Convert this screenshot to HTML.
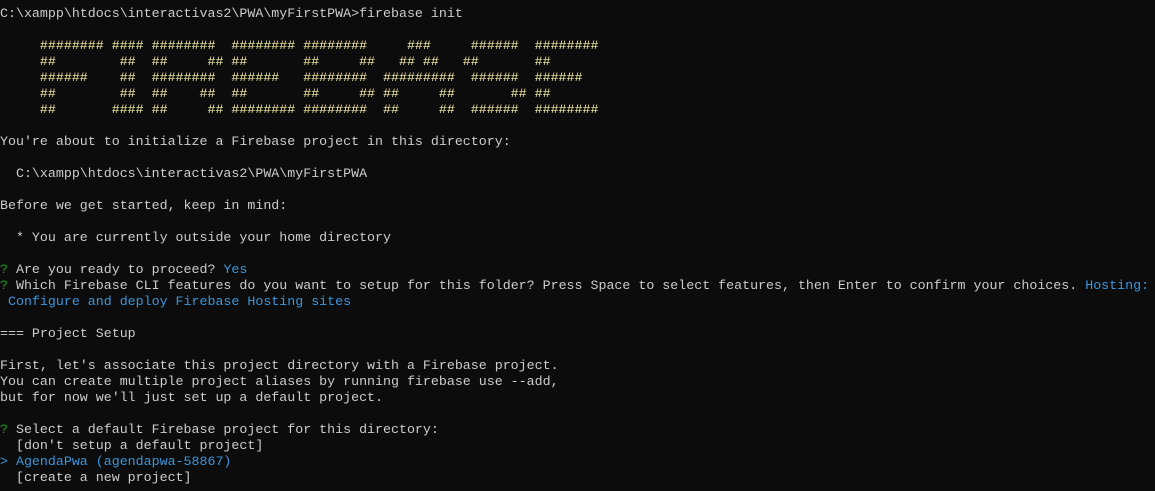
<!DOCTYPE html>
<html><head><meta charset="utf-8"><style>
html,body{margin:0;padding:0;background:#0c0c0c;width:1155px;height:491px;overflow:hidden}
pre{margin:0;padding:6px 0 0 0;font-family:"Liberation Mono",monospace;font-size:13.31px;line-height:16px;color:#cccccc;white-space:pre}
.y{color:#f9f1a5}.g{color:#13a10e}.b{color:#3a96dd}
</style></head><body><pre>C:\xampp\htdocs\interactivas2\PWA\myFirstPWA&gt;firebase init

<span class="y">     ######## #### ########  ######## ########     ###     ######  ########
     ##        ##  ##     ## ##       ##     ##   ## ##   ##       ##
     ######    ##  ########  ######   ########  #########  ######  ######
     ##        ##  ##    ##  ##       ##     ## ##     ##       ## ##
     ##       #### ##     ## ######## ########  ##     ##  ######  ########</span>

You're about to initialize a Firebase project in this directory:

  C:\xampp\htdocs\interactivas2\PWA\myFirstPWA

Before we get started, keep in mind:

  * You are currently outside your home directory

<span class="g">?</span> Are you ready to proceed? <span class="b">Yes</span>
<span class="g">?</span> Which Firebase CLI features do you want to setup for this folder? Press Space to select features, then Enter to confirm your choices. <span class="b">Hosting:</span>
<span class="b"> Configure and deploy Firebase Hosting sites</span>

=== Project Setup

First, let's associate this project directory with a Firebase project.
You can create multiple project aliases by running firebase use --add,
but for now we'll just set up a default project.

<span class="g">?</span> Select a default Firebase project for this directory:
  [don't setup a default project]
<span class="b">&gt; AgendaPwa (agendapwa-58867)</span>
  [create a new project]</pre></body></html>
